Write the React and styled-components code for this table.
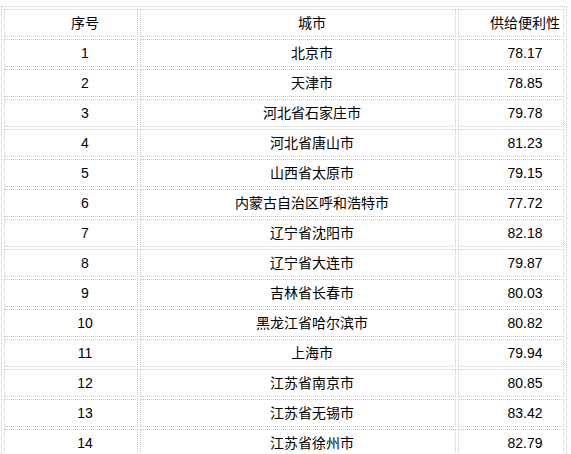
import React from 'react';
import styled, { createGlobalStyle } from 'styled-components';

const GlobalStyle = createGlobalStyle`
  body {
    margin: 0;
    background: #ffffff;
    font-family: "Liberation Sans", "Noto Sans CJK SC", sans-serif;
  }
`;

const Table = styled.table`
  margin: 6px 0 0 1px;
  width: 566px;
  table-layout: fixed;
  border-collapse: separate;
  border-spacing: 2px;
  border: 1px dotted #c8c8c8;
  font-size: 14px;
  color: #000;
`;

const Cell = styled.td`
  box-sizing: border-box;
  width: ${p => p.$w ? `${p.$w}px` : 'auto'};
  height: 28px;
  padding: 0;
  border: 1px dotted #c8c8c8;
  text-align: center;
  text-indent: 2em;
  vertical-align: middle;
  font-weight: normal;
  line-height: 20px;
  white-space: nowrap;
`;

const rows = [
  ['1', '北京市', '78.17'],
  ['2', '天津市', '78.85'],
  ['3', '河北省石家庄市', '79.78'],
  ['4', '河北省唐山市', '81.23'],
  ['5', '山西省太原市', '79.15'],
  ['6', '内蒙古自治区呼和浩特市', '77.72'],
  ['7', '辽宁省沈阳市', '82.18'],
  ['8', '辽宁省大连市', '79.87'],
  ['9', '吉林省长春市', '80.03'],
  ['10', '黑龙江省哈尔滨市', '80.82'],
  ['11', '上海市', '79.94'],
  ['12', '江苏省南京市', '80.85'],
  ['13', '江苏省无锡市', '83.42'],
  ['14', '江苏省徐州市', '82.79'],
];

const App = () => (
  <React.Fragment>
    <GlobalStyle />
    <Table>
      <tbody>
        <tr>
          <Cell as="th" $w={134}>序号</Cell>
          <Cell as="th" $w={316}>城市</Cell>
          <Cell as="th" $w={106}>供给便利性</Cell>
        </tr>
        {rows.map(([no, city, score]) => (
          <tr key={no}>
            <Cell>{no}</Cell>
            <Cell>{city}</Cell>
            <Cell>{score}</Cell>
          </tr>
        ))}
      </tbody>
    </Table>
  </React.Fragment>
);

export default App;
